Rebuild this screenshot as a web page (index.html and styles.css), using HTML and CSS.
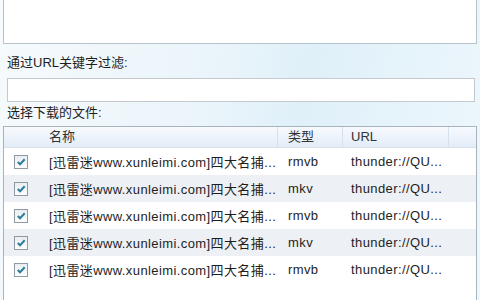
FILE: index.html
```html
<!DOCTYPE html>
<html lang="zh-CN">
<head>
  <meta charset="UTF-8">
  <title>新建任务</title>
  <link rel="stylesheet" href="styles.css">
</head>
<body>
  <div class="dialog">
    <div class="memo"></div>

    <div class="label">通过URL关键字过滤:</div>
    <div class="filter"></div>

    <div class="label list-label">选择下载的文件:</div>
    <div class="file-list">
      <div class="row head">
        <div class="cell check"></div>
        <div class="cell name">名称</div>
        <div class="cell type">类型</div>
        <div class="cell url">URL</div>
        <div class="cell rest"></div>
      </div>
      <div class="row">
        <div class="cell check"><span class="box"><svg viewBox="0 0 13 13"><path d="M3 6.5 L5.5 9 L10.5 3.5"/></svg></span></div>
        <div class="cell name">[迅雷迷www.xunleimi.com]四大名捕...</div>
        <div class="cell type">rmvb</div>
        <div class="cell url">thunder://QU...</div>
        <div class="cell rest"></div>
      </div>
      <div class="row alt">
        <div class="cell check"><span class="box"><svg viewBox="0 0 13 13"><path d="M3 6.5 L5.5 9 L10.5 3.5"/></svg></span></div>
        <div class="cell name">[迅雷迷www.xunleimi.com]四大名捕...</div>
        <div class="cell type">mkv</div>
        <div class="cell url">thunder://QU...</div>
        <div class="cell rest"></div>
      </div>
      <div class="row">
        <div class="cell check"><span class="box"><svg viewBox="0 0 13 13"><path d="M3 6.5 L5.5 9 L10.5 3.5"/></svg></span></div>
        <div class="cell name">[迅雷迷www.xunleimi.com]四大名捕...</div>
        <div class="cell type">rmvb</div>
        <div class="cell url">thunder://QU...</div>
        <div class="cell rest"></div>
      </div>
      <div class="row alt">
        <div class="cell check"><span class="box"><svg viewBox="0 0 13 13"><path d="M3 6.5 L5.5 9 L10.5 3.5"/></svg></span></div>
        <div class="cell name">[迅雷迷www.xunleimi.com]四大名捕...</div>
        <div class="cell type">mkv</div>
        <div class="cell url">thunder://QU...</div>
        <div class="cell rest"></div>
      </div>
      <div class="row">
        <div class="cell check"><span class="box"><svg viewBox="0 0 13 13"><path d="M3 6.5 L5.5 9 L10.5 3.5"/></svg></span></div>
        <div class="cell name">[迅雷迷www.xunleimi.com]四大名捕...</div>
        <div class="cell type">rmvb</div>
        <div class="cell url">thunder://QU...</div>
        <div class="cell rest"></div>
      </div>
    </div>
  </div>
</body>
</html>
```

FILE: styles.css
```css
/* 对话框基本样式 */
body {
  margin: 0;
  padding: 0;
  font-family: "Liberation Sans", "Noto Sans CJK SC", sans-serif;
  font-size: 13px;
  color: #1e1e1e;
  background: linear-gradient(100deg, #f6fafd 0%, #e9f4fa 45%, #dff0f9 60%, #eef7fc 100%);
  height: 300px;
  overflow: hidden;
}

.dialog {
  display: flex;
  flex-direction: column;
  padding: 0 3px;
}

/* 上方的文本框（只露出下半部分） */
.memo {
  height: 44px;
  margin-top: -2px;
  background: #fff;
  border: 1px solid #b9c2c9;
}

.label {
  margin: 10px 0 0 4px;
  height: 18px;
  line-height: 18px;
}

.list-label {
  margin-top: 2px;
}

.filter {
  height: 22px;
  margin: 6px 2px 0 4px;
  background: #fff;
  border: 1px solid #c3c9ce;
}

/* 文件列表 */
.file-list {
  margin-top: 4px;
  height: 200px;
  background: #fff;
  border: 1px solid #a9b3bb;
}

.row {
  display: flex;
  height: 27px;
  align-items: center;
  letter-spacing: 0.4px;
}

.row.alt {
  background-color: #edf0f4;
}

.row.head {
  height: 20px;
  background: linear-gradient(#f7fafe, #e2ecf7);
  border-bottom: 1px solid #d6e1ec;
  color: #333;
  letter-spacing: 0;
}

.head .cell {
  height: 20px;
  line-height: 20px;
  border-right: 1px solid #d5e0ec;
}

.head .cell.check {
  border-right: none;
}

.cell {
  box-sizing: border-box;
  white-space: nowrap;
  overflow: hidden;
}

.check {
  width: 45px;
  padding-left: 10px;
  display: flex;
  align-items: center;
}

.name {
  width: 229px;
}

.type {
  width: 65px;
  padding-left: 10px;
}

.url {
  width: 106px;
  padding-left: 8px;
}

.rest {
  flex: 1;
}

.head .rest {
  border-right: none;
}

/* 复选框 */
.box {
  display: inline-block;
  width: 14px;
  height: 14px;
  box-sizing: border-box;
  border: 1px solid #8f9aa6;
  background: linear-gradient(#e9eef2, #fdfdfd);
}

.box svg {
  display: block;
  width: 12px;
  height: 12px;
}

.box path {
  fill: none;
  stroke: #2e7e9a;
  stroke-width: 2.2;
}
```
